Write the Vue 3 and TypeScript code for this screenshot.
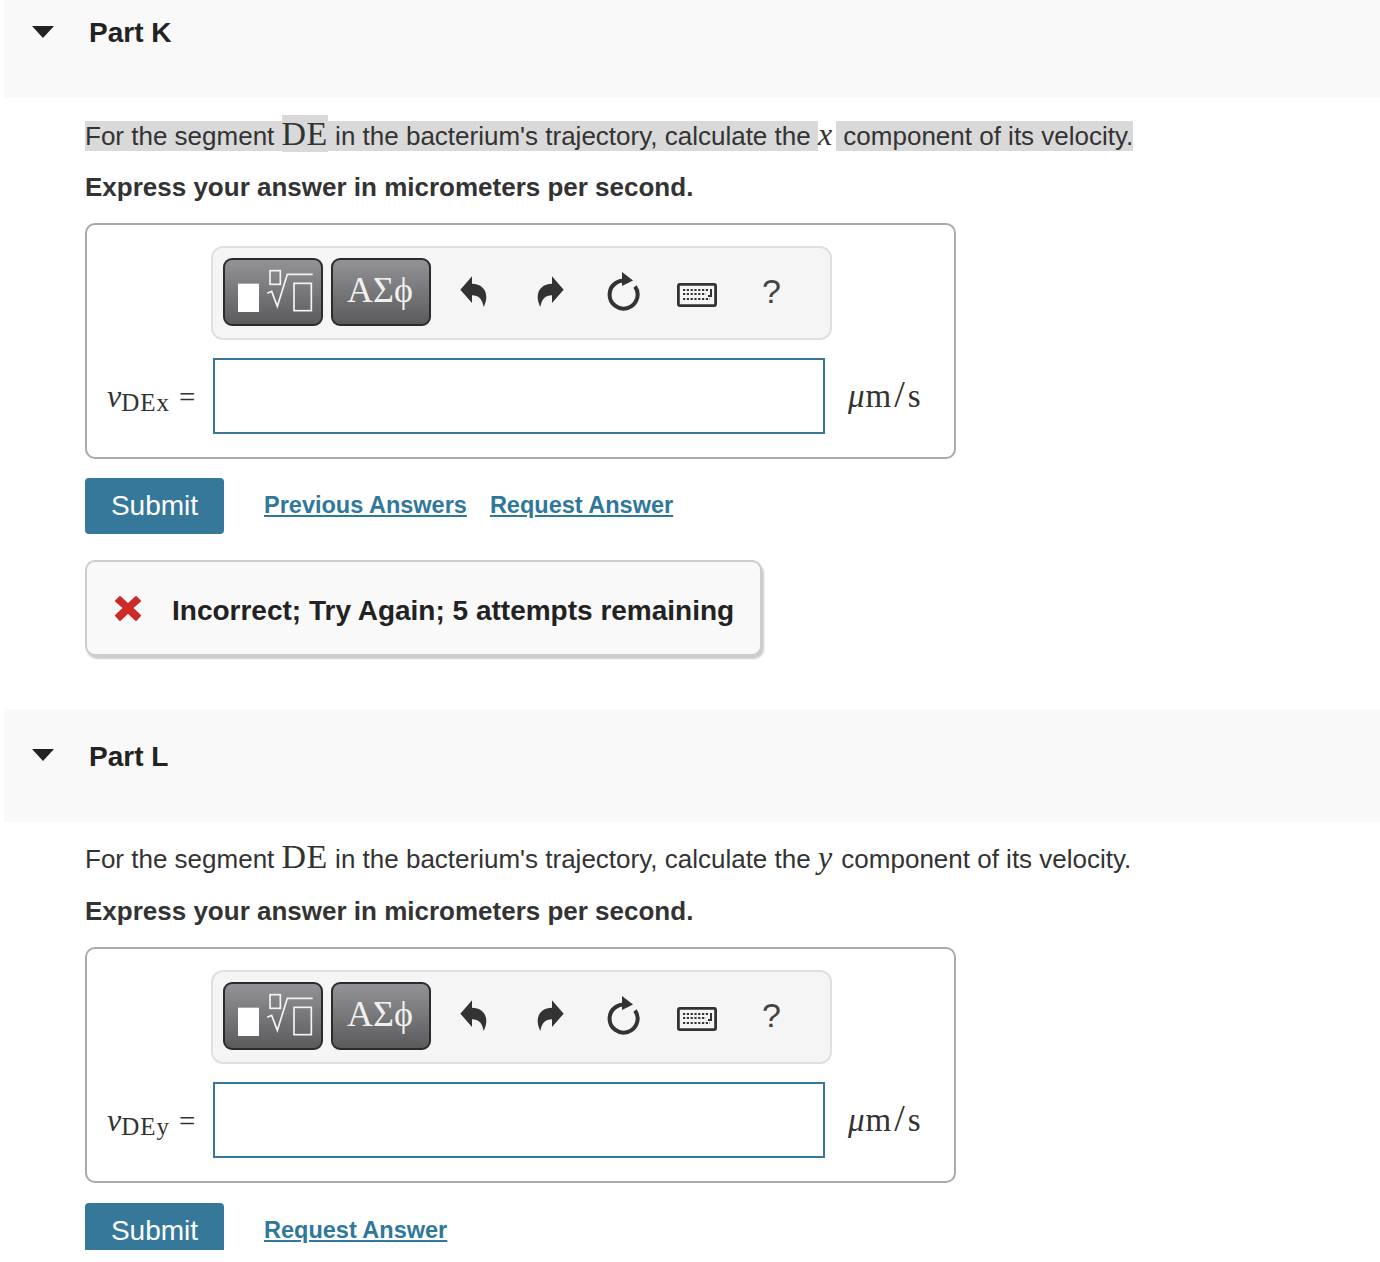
<script setup lang="ts">
interface Part {
  name: string
  axis: string
  sub: string
  selected: boolean
  previous: boolean
  feedback: string
}

const parts: Part[] = [
  { name: 'Part K', axis: 'x', sub: 'x', selected: true, previous: true, feedback: 'Incorrect; Try Again; 5 attempts remaining' },
  { name: 'Part L', axis: 'y', sub: 'y', selected: false, previous: false, feedback: '' }
]

const keyRows = [
  { y: 7, x1: 6, x2: 31 },
  { y: 11, x1: 6, x2: 29 },
  { y: 16, x1: 6, x2: 33 }
]
</script>

<template>
  <div class="page">
    <section v-for="(part, i) in parts" :key="part.name" class="part" :class="{ first: i === 0 }">
      <header class="part-head">
        <span class="caret"></span>
        <h2>{{ part.name }}</h2>
      </header>

      <div class="part-body">
        <p class="question">
          <span :class="{ sel: part.selected }">For the segment </span><span class="math-de" :class="{ sel: part.selected }">DE</span><span :class="{ sel: part.selected }"> in the bacterium's trajectory, calculate the </span><span class="math-var">{{ part.axis }}</span><span :class="{ sel: part.selected }"> component of its velocity.</span>
        </p>
        <p class="express">Express your answer in micrometers per second.</p>

        <div class="answer-box">
          <div class="toolbar">
            <button class="tool-btn" type="button">
              <svg width="96" height="64" viewBox="76 61 288 192">
                <rect x="115" y="132" width="63" height="85" fill="#fff" />
                <g fill="none" stroke="#f4f4f4" stroke-width="5">
                  <rect x="211" y="93" width="31" height="41" />
                  <rect x="283" y="131" width="52" height="82" />
                  <path d="M203 161 L216 155 L233 200 L263 104 H339" />
                </g>
              </svg>
            </button>
            <button class="tool-btn greek" type="button">ΑΣϕ</button>
            <svg class="undo" width="30" height="34" viewBox="0 0 90 100">
              <path d="M10 43 L45 3 V25 C80 25 100 55 80 95 C75 70 65 60 45 60 V83 Z" fill="#333" />
            </svg>
            <svg class="redo" width="30" height="34" viewBox="0 0 90 100">
              <path d="M10 43 L45 3 V25 C80 25 100 55 80 95 C75 70 65 60 45 60 V83 Z" fill="#333" />
            </svg>
            <svg class="reload" width="36" height="42" viewBox="0 0 36 42">
              <path d="M23.5 10.5 A14 14 0 1 0 30 15.5" fill="none" stroke="#333" stroke-width="4" />
              <path d="M17 1 L28 9.5 L17 15 Z" fill="#333" />
            </svg>
            <svg class="keyboard" width="40" height="24" viewBox="0 0 40 24">
              <rect x="1.4" y="1.4" width="37.2" height="21.2" rx="1.5" fill="none" stroke="#333" stroke-width="2.8" />
              <line v-for="row in keyRows" :key="row.y" :x1="row.x1" :x2="row.x2" :y1="row.y" :y2="row.y" stroke="#333" stroke-width="2.2" stroke-dasharray="2.2 1.6" />
              <path d="M34 6 V13 H31" fill="none" stroke="#333" stroke-width="2" />
            </svg>
            <span class="help">?</span>
          </div>

          <div class="input-row">
            <div class="label">
              <i>v</i><span class="sub">DE{{ part.sub }}</span><span class="eq">=</span>
            </div>
            <input class="answer-input" type="text" />
            <div class="units"><i>μ</i>m<span class="slash">/</span>s</div>
          </div>
        </div>

        <div class="actions">
          <button class="submit" type="button">Submit</button>
          <a v-if="part.previous" class="link" href="#">Previous Answers</a>
          <a class="link" href="#">Request Answer</a>
        </div>

        <div v-if="part.feedback" class="feedback">
          <svg width="30" height="30" viewBox="0 0 30 30">
            <path d="M7 4 L15 11.5 L23 4 L27 8 L19 15 L27 22.5 L23 27 L15 19.5 L7 27 L3 22.5 L11 15 L3 8 Z" fill="#cc2b2b" stroke="#cc2b2b" stroke-width="2" stroke-linejoin="round" />
          </svg>
          <span>{{ part.feedback }}</span>
        </div>
      </div>
    </section>
  </div>
</template>

<style scoped>
.page {
  width: 1380px;
  height: 1250px;
  overflow: hidden;
  background: #fff;
  font-family: "Liberation Sans", Arial, sans-serif;
  color: #333;
}

.part-head {
  height: 113px;
  margin-left: 4px;
  background: #f9f9f9;
  display: flex;
  align-items: flex-start;
  padding-top: 30px;
  box-sizing: border-box;
}

.first .part-head {
  height: 98px;
  padding-top: 15px;
}

.caret {
  width: 0;
  height: 0;
  margin: 10px 0 0 28px;
  border-left: 11px solid transparent;
  border-right: 11px solid transparent;
  border-top: 12px solid #222;
}

.first .caret {
  margin-top: 11px;
}

h2 {
  margin: 0 0 0 35px;
  font-size: 28px;
  line-height: 36px;
  font-weight: 700;
  color: #222;
}

.part-body {
  padding-left: 85px;
}

.question {
  margin: 17px 0 0;
  font-size: 26px;
  line-height: 36px;
  white-space: pre-wrap;
}

.first .question {
  margin-top: 18px;
}

.sel {
  background: #d9d9d9;
}

.math-de {
  font-family: "Liberation Serif", serif;
  font-size: 34px;
  letter-spacing: 0.5px;
}

.math-var {
  font-family: "Liberation Serif", serif;
  font-style: italic;
  font-size: 32px;
  padding-right: 2px;
}

.first .math-var {
  padding-right: 4px;
}

.express {
  margin: 16px 0 0;
  font-size: 26px;
  line-height: 36px;
  font-weight: 700;
}

.first .express {
  margin-top: 15px;
}

.answer-box {
  width: 871px;
  height: 236px;
  margin-top: 18px;
  box-sizing: border-box;
  border: 2px solid #aaa;
  border-radius: 10px;
  padding: 21px 0 0 124px;
}

.toolbar {
  width: 621px;
  height: 94px;
  box-sizing: border-box;
  border: 2px solid #e0e0e0;
  border-radius: 12px;
  background: #f5f5f5;
  display: flex;
  align-items: center;
  padding: 0 0 2px 10px;
}

.tool-btn {
  width: 100px;
  height: 68px;
  margin-right: 8px;
  padding: 0;
  box-sizing: border-box;
  border: 2px solid #2b2b2b;
  border-radius: 9px;
  background: linear-gradient(#939397, #5b5b5d);
  display: flex;
  align-items: center;
  justify-content: center;
}

.greek {
  font-family: "Liberation Serif", serif;
  font-size: 36px;
  color: #f0f0f0;
  padding: 0 2px 4px 0;
}

.undo {
  margin-left: 18px;
}

.redo {
  margin-left: 50px;
  transform: scaleX(-1);
}

.reload {
  margin-left: 38px;
}

.keyboard {
  margin: 6px 0 0 36px;
}

.help {
  margin: 0 0 2px 45px;
  font-size: 34px;
  color: #444;
}

.input-row {
  display: flex;
  align-items: center;
  margin: 18px 0 0 -124px;
}

.label {
  width: 126px;
  box-sizing: border-box;
  padding-left: 20px;
  display: flex;
  align-items: baseline;
  font-family: "Liberation Serif", serif;
  white-space: nowrap;
}

.label i {
  font-size: 32px;
}

.sub {
  font-size: 25px;
  letter-spacing: 1px;
  position: relative;
  top: 4px;
}

.eq {
  font-size: 29px;
  margin-left: 9px;
}

.answer-input {
  width: 612px;
  height: 76px;
  box-sizing: border-box;
  border: 2px solid #36779a;
  background: #fff;
  padding: 0;
  outline: none;
}

.units {
  margin: 0 0 4px 23px;
  font-family: "Liberation Serif", serif;
  font-size: 33px;
  letter-spacing: 1px;
  white-space: nowrap;
}

.slash {
  font-size: 38px;
  margin: 0 2px;
}

.actions {
  margin-top: 20px;
  display: flex;
  align-items: flex-start;
}

.first .actions {
  margin-top: 19px;
}

.submit {
  width: 139px;
  height: 56px;
  border: 0;
  border-radius: 4px;
  background: #36789a;
  color: #fff;
  font-family: inherit;
  font-size: 28px;
  padding: 0;
  margin-right: 40px;
}

.link {
  margin: 12px 23px 0 0;
  font-size: 23.5px;
  line-height: 30px;
  font-weight: 700;
  color: #2f789c;
  text-decoration: underline;
}

.feedback {
  width: 677px;
  height: 96px;
  margin: 26px 0 53px;
  box-sizing: border-box;
  border: 2px solid #ccc;
  border-radius: 10px;
  background: #f9f9f9;
  box-shadow: 2px 3px 2px #ccc;
  display: flex;
  align-items: center;
  padding-left: 26px;
  font-size: 28px;
  font-weight: 700;
  color: #222;
  white-space: nowrap;
}

.feedback span {
  margin: 6px 0 0 29px;
}
</style>

<style>
body {
  background: #fff;
}
</style>
